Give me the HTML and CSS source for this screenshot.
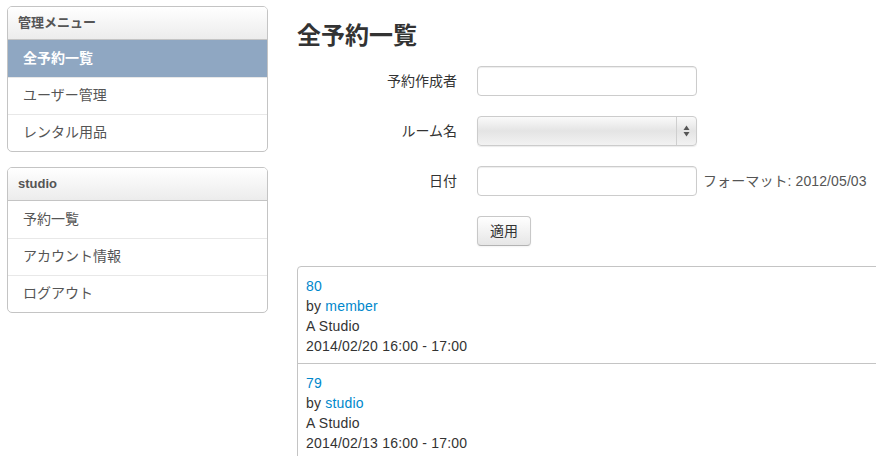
FILE: index.html
```html
<!DOCTYPE html>
<html lang="ja">
<head>
<meta charset="utf-8">
<title>全予約一覧</title>
<link rel="stylesheet" href="styles.css">
</head>
<body>
<div class="page">
  <aside class="sidebar">
    <div class="panel">
      <div class="panel-head">管理メニュー</div>
      <a class="item active" href="#">全予約一覧</a>
      <a class="item" href="#">ユーザー管理</a>
      <a class="item" href="#">レンタル用品</a>
    </div>
    <div class="panel">
      <div class="panel-head">studio</div>
      <a class="item" href="#">予約一覧</a>
      <a class="item" href="#">アカウント情報</a>
      <a class="item" href="#">ログアウト</a>
    </div>
  </aside>
  <main class="main">
    <h1 class="title">全予約一覧</h1>
    <form class="form">
      <div class="row">
        <label class="label">予約作成者</label>
        <div class="controls"><input class="input" type="text"></div>
      </div>
      <div class="row">
        <label class="label">ルーム名</label>
        <div class="controls">
          <div class="select">
            <span class="select-arrows">
              <svg width="7" height="12" viewBox="0 0 7 12"><path d="M3.5 0.5 L6.5 5 L0.5 5 Z" fill="#555"/><path d="M0.5 7 L6.5 7 L3.5 11.5 Z" fill="#555"/></svg>
            </span>
          </div>
        </div>
      </div>
      <div class="row">
        <label class="label">日付</label>
        <div class="controls"><input class="input" type="text"><span class="help">フォーマット: 2012/05/03</span></div>
      </div>
      <div class="row">
        <div class="label"></div>
        <div class="controls"><button class="btn" type="button">適用</button></div>
      </div>
    </form>
    <div class="results">
      <div class="entry">
        <a href="#">80</a><br>
        by <a href="#">member</a><br>
        A Studio<br>
        2014/02/20 16:00 - 17:00
      </div>
      <div class="entry">
        <a href="#">79</a><br>
        by <a href="#">studio</a><br>
        A Studio<br>
        2014/02/13 16:00 - 17:00
      </div>
    </div>
  </main>
</div>
</body>
</html>
```

FILE: styles.css
```css
html, body {
  margin: 0;
  padding: 0;
  background: #fff;
  overflow: hidden;
}
body {
  font-family: "Liberation Sans", "Noto Sans CJK JP", sans-serif;
  font-size: 14px;
  line-height: 20px;
  color: #333;
}
a { color: #0088cc; text-decoration: none; }

.page {
  display: flex;
  align-items: flex-start;
  padding: 6px 0 0 7px;
}

.sidebar {
  width: 261px;
  flex: none;
  display: flex;
  flex-direction: column;
  gap: 15px;
}
.panel {
  border: 1px solid #c4c4c4;
  border-radius: 5px;
  overflow: hidden;
  display: flex;
  flex-direction: column;
}
.panel-head {
  height: 32px;
  line-height: 32px;
  padding-left: 10px;
  font-size: 13px;
  font-weight: bold;
  color: #555;
  background: linear-gradient(#ffffff, #ececec);
  border-bottom: 1px solid #c4c4c4;
}
.item {
  display: block;
  height: 35px;
  line-height: 35px;
  padding: 0 0 1px 15px;
  color: #555;
  border-top: 1px solid #e8e8e8;
}
.panel-head + .item { border-top: none; height: 36px; line-height: 36px; }
.item.active {
  background: #8fa7c2;
  color: #fff;
  font-weight: bold;
}

.main {
  margin-left: 29px;
  flex: 1;
  min-width: 0;
}
.title {
  margin: 12px 0 12px;
  font-size: 24px;
  line-height: 36px;
  font-weight: bold;
  color: #333;
}
.form { margin: 0; }
.row {
  display: flex;
  align-items: center;
  margin-bottom: 20px;
}
.label {
  width: 160px;
  text-align: right;
  line-height: 30px;
  margin-right: 20px;
  color: #333;
}
.controls {
  display: flex;
  align-items: center;
}
.input {
  box-sizing: border-box;
  width: 220px;
  height: 30px;
  margin: 0;
  border: 1px solid #ccc;
  border-radius: 4px;
  box-shadow: inset 0 1px 1px rgba(0,0,0,0.075);
  font: inherit;
  padding: 4px 6px;
}
.help {
  margin-left: 6px;
  color: #555;
  letter-spacing: 0.1px;
}
.select {
  box-sizing: border-box;
  width: 220px;
  height: 30px;
  border: 1px solid #ccc;
  border-radius: 4px;
  background: linear-gradient(#fafafa, #e4e4e4 50%, #f2f2f2);
  box-shadow: 0 1px 1px rgba(0,0,0,0.08);
  display: flex;
  justify-content: flex-end;
}
.select-arrows {
  width: 19px;
  border-left: 1px solid #cfcfcf;
  display: flex;
  align-items: center;
  justify-content: center;
}
.select-arrows svg { display: block; }
.btn {
  box-sizing: border-box;
  width: 54px;
  height: 30px;
  padding: 0;
  font: inherit;
  color: #333;
  border: 1px solid #c8c8c8;
  border-bottom-color: #b3b3b3;
  border-radius: 4px;
  background: linear-gradient(#ffffff, #e6e6e6);
  box-shadow: 0 1px 2px rgba(0,0,0,0.05);
}
.results {
  margin-top: 0;
  width: 620px;
  border: 1px solid #c4c4c4;
  border-radius: 4px 0 0 0;
}
.entry {
  padding: 9px 8px 7px;
  border-top: 1px solid #c4c4c4;
  letter-spacing: 0.2px;
}
.entry:first-child { border-top: none; }
```
